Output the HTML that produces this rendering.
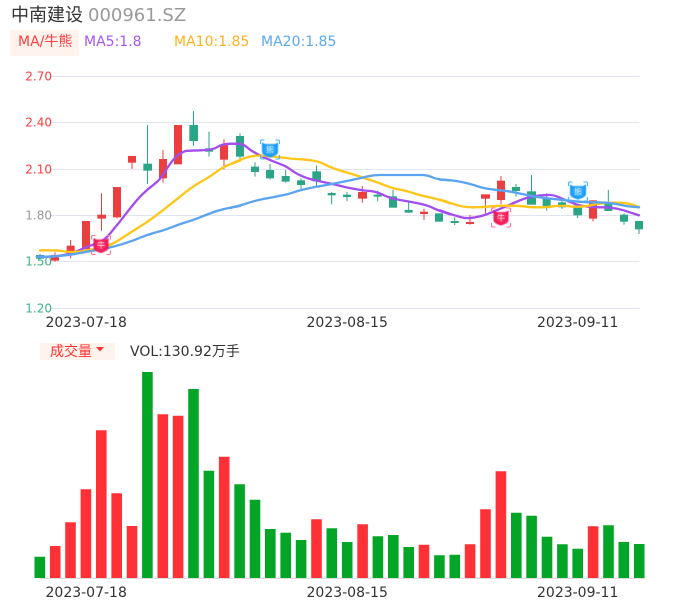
<!DOCTYPE html>
<html lang="zh">
<head>
<meta charset="utf-8">
<title>中南建设</title>
<style>
html,body{margin:0;padding:0;background:#fff;width:686px;height:606px;overflow:hidden}
svg{display:block}
text{font-family:"DejaVu Sans","WenQuanYi Zen Hei","Noto Sans CJK SC",sans-serif}
</style>
</head>
<body>
<svg width="686" height="606" viewBox="0 0 686 606" xmlns="http://www.w3.org/2000/svg">
<defs>
<radialGradient id="rg" cx="50%" cy="45%" r="60%"><stop offset="0" stop-color="#ff4d7d"/><stop offset="1" stop-color="#f0054c"/></radialGradient>
<radialGradient id="bg" cx="50%" cy="45%" r="60%"><stop offset="0" stop-color="#52bcff"/><stop offset="1" stop-color="#0492fb"/></radialGradient>
<filter id="soft" x="-20%" y="-20%" width="140%" height="140%"><feGaussianBlur stdDeviation=".45"/></filter>
</defs>
<!-- header -->
<text x="11" y="21" font-size="18" fill="#333">中南建设</text>
<text x="88" y="21" font-size="18" fill="#999">000961.SZ</text>
<rect x="10" y="30" width="69" height="26" fill="#fff3ee"/>
<text x="18" y="46" font-size="14" fill="#ff4040">MA/牛熊</text>
<text x="84" y="46" font-size="14" fill="#a855f7">MA5:1.8</text>
<text x="174" y="46" font-size="14" fill="#ffb31a">MA10:1.85</text>
<text x="261" y="46" font-size="14" fill="#5ba8f5">MA20:1.85</text>

<!-- grid -->
<g stroke="#e2e5f0" stroke-width="1">
<path d="M50 76.500H639M50 122.500H639M50 169.500H639M50 215.500H639M50 261.500H639M50 308.500H639"/>
</g>
<!-- axis labels -->
<g font-size="12" text-anchor="end">
<text x="52" y="80.500" fill="#ff3b3b">2.70</text>
<text x="52" y="126.500" fill="#ff3b3b">2.40</text>
<text x="52" y="173.500" fill="#ff3b3b">2.10</text>
<text x="52" y="219.500" fill="#999">1.80</text>
<text x="52" y="265.500" fill="#3fb08e">1.50</text>
<text x="52" y="312.500" fill="#3fb08e">1.20</text>
</g>

<!-- candles: left -->
<g transform="translate(20 100) scale(.33333)">
<g fill="#eb3f3f">
<rect x="93" y="465" width="24" height="17"/><rect x="103.500" y="457" width="3" height="28"/>
<rect x="140" y="437" width="24" height="29"/><rect x="150.500" y="420" width="3" height="55"/>
<rect x="186" y="363" width="24" height="85"/>
<rect x="232" y="344" width="26" height="12"/><rect x="243" y="280" width="3" height="112"/>
<rect x="279" y="261" width="24" height="91"/><rect x="289.500" y="261" width="3" height="94"/>
<rect x="324" y="168" width="24" height="20"/><rect x="334.500" y="168" width="3" height="39"/>
<rect x="417" y="177" width="24" height="58"/><rect x="427.500" y="150" width="3" height="98"/>
<rect x="462" y="75" width="24" height="118"/>
<rect x="600" y="134" width="24" height="45"/><rect x="610.500" y="118" width="3" height="90"/>
</g>
<g fill="#2aa687">
<rect x="48" y="465" width="24" height="11"/><rect x="58.500" y="462" width="3" height="16"/>
<rect x="370" y="191" width="26" height="21"/><rect x="381" y="75" width="3" height="177"/>
<rect x="508" y="75" width="26" height="48"/><rect x="519" y="33" width="3" height="104"/>
<rect x="555" y="145" width="24" height="10"/><rect x="565.500" y="95" width="3" height="75"/>
</g>
</g>
<!-- candles: middle -->
<g transform="translate(230 100) scale(.33333)">
<g fill="#2aa687">
<rect x="18" y="108" width="24" height="62"/><rect x="28.500" y="100" width="3" height="78"/>
<rect x="63" y="200" width="24" height="16"/><rect x="73.500" y="187" width="3" height="43"/>
<rect x="108" y="210" width="24" height="25"/><rect x="118.500" y="192" width="3" height="46"/>
<rect x="155" y="228" width="24" height="17"/><rect x="165.500" y="210" width="3" height="38"/>
<rect x="201" y="241" width="24" height="14"/><rect x="211.500" y="235" width="3" height="32"/>
<rect x="247" y="214" width="26" height="30"/><rect x="258" y="197" width="3" height="63"/>
<rect x="293" y="279" width="24" height="7"/><rect x="303.500" y="276" width="3" height="37"/>
<rect x="339" y="284" width="24" height="7"/><rect x="349.500" y="276" width="3" height="27"/>
<rect x="431" y="284" width="24" height="6"/><rect x="441.500" y="272" width="3" height="32"/>
<rect x="477" y="289" width="24" height="34"/><rect x="487.500" y="270" width="3" height="53"/>
<rect x="524" y="330" width="24" height="8"/><rect x="534.500" y="305" width="3" height="33"/>
<rect x="615" y="340" width="24" height="25"/>
</g>
<g fill="#eb3f3f">
<rect x="384" y="276" width="27" height="20"/><rect x="395.500" y="258" width="3" height="50"/>
<rect x="570" y="335" width="24" height="7"/><rect x="580.500" y="326" width="3" height="34"/>
</g>
</g>
<!-- candles: right -->
<g transform="translate(440 130) scale(.33333)">
<g fill="#2aa687">
<rect x="32" y="273" width="24" height="6"/><rect x="42.500" y="262" width="3" height="23"/>
<rect x="216" y="171" width="24" height="12"/><rect x="226.500" y="162" width="3" height="38"/>
<rect x="261" y="184" width="27" height="40"/><rect x="273" y="135" width="3" height="89"/>
<rect x="308" y="205" width="24" height="23"/><rect x="318.500" y="190" width="3" height="52"/>
<rect x="354" y="217" width="24" height="15"/><rect x="364.500" y="210" width="3" height="27"/>
<rect x="400" y="226" width="26" height="30"/><rect x="411.500" y="226" width="3" height="38"/>
<rect x="493" y="222" width="24" height="21"/><rect x="503.500" y="180" width="3" height="63"/>
<rect x="540" y="254" width="24" height="21"/><rect x="550.500" y="250" width="3" height="34"/>
<rect x="585" y="273" width="24" height="25"/><rect x="595.500" y="273" width="3" height="39"/>
</g>
<g fill="#eb3f3f">
<rect x="78" y="276" width="24" height="6"/><rect x="88.500" y="255" width="3" height="29"/>
<rect x="123" y="193" width="27" height="13"/><rect x="135" y="193" width="3" height="57"/>
<rect x="171" y="152" width="24" height="58"/><rect x="181.500" y="138" width="3" height="84"/>
<rect x="447" y="211" width="24" height="55"/><rect x="457.500" y="211" width="3" height="63"/>
</g>
</g>

<!-- MA lines -->
<g fill="none" stroke-linejoin="round" stroke-linecap="round" stroke-width="7">
<g stroke="#a44dee">
<path transform="translate(20 100) scale(.33333)" d="M60,470 L82,470 Q105,470 127,466 Q150,462 165,456 Q180,450 195,443 Q210,437 227,431 Q245,425 255,416 Q265,408 282,386 Q300,365 325,332 Q350,300 366,284 Q382,268 401,254 Q420,240 435,215 Q450,190 462,177 Q474,165 482,160 Q490,155 497,153 Q505,152 542,151 Q580,150 592,141 Q605,132 632,131 L660,131"/>
<path transform="translate(230 100) scale(.33333)" d="M0,131 L20,131 Q40,132 50,141 Q60,150 80,161 Q100,172 125,182 Q150,192 160,196 Q170,200 185,211 Q200,222 220,230 Q240,238 270,244 Q300,250 325,256 Q350,263 375,267 Q400,272 420,273 Q440,275 460,285 Q480,295 510,300 Q540,305 565,310 Q590,315 605,322 Q620,330 640,336 L660,343"/>
<path transform="translate(440 130) scale(.33333)" d="M0,241 L20,248 Q40,255 55,259 Q70,264 80,264 Q90,265 110,261 Q130,258 155,247 Q180,237 205,226 Q230,215 250,207 Q270,200 295,197 Q320,194 332,195 Q345,196 362,204 Q380,212 400,220 Q420,228 445,230 Q470,232 490,232 Q510,232 530,236 Q550,240 573,248 L597,256"/>
</g>
<g stroke="#ffc61a">
<path transform="translate(20 100) scale(.33333)" d="M60,451 L85,451 Q110,451 125,453 Q140,456 157,456 Q175,456 197,452 Q220,448 245,442 Q270,437 295,421 Q320,405 350,386 Q380,368 405,349 Q430,330 455,310 Q480,290 500,274 Q520,258 545,244 Q570,230 590,215 Q610,200 635,191 L660,182"/>
<path transform="translate(230 100) scale(.33333)" d="M0,193 L20,184 Q40,175 60,170 Q80,165 115,168 Q150,172 170,174 Q190,177 215,178 Q240,180 255,183 Q270,186 290,196 Q310,206 335,213 Q360,220 385,228 Q410,237 430,243 Q450,250 470,258 Q490,266 510,269 Q530,273 555,281 Q580,289 600,292 Q620,296 640,303 L660,310"/>
<path transform="translate(440 130) scale(.33333)" d="M0,209 L20,215 Q40,222 57,227 Q75,232 102,232 Q130,232 155,229 Q180,227 205,227 Q230,227 250,229 Q270,232 295,232 Q320,232 340,229 Q360,226 380,228 Q400,231 420,230 Q440,229 465,223 Q490,218 525,218 Q560,218 578,224 L597,231"/>
</g>
<g stroke="#5ba4f2">
<path transform="translate(20 100) scale(.33333)" d="M50,470 L75,470 Q100,470 125,467 Q150,465 175,460 Q200,455 225,451 Q250,448 275,441 Q300,435 320,428 Q340,422 360,413 Q380,405 405,398 Q430,392 455,382 Q480,372 500,366 Q520,360 545,350 Q570,340 590,333 Q610,327 635,322 L660,318"/>
<path transform="translate(230 100) scale(.33333)" d="M0,324 L20,319 Q40,314 60,307 Q80,301 105,296 Q130,292 152,287 Q175,283 197,275 Q220,268 255,261 Q290,255 315,250 Q340,245 365,240 Q390,235 410,230 Q430,225 450,225 L575,225 Q590,225 605,231 Q620,238 640,239 L660,241"/>
<path transform="translate(440 130) scale(.33333)" d="M0,149 L20,150 Q40,151 65,156 Q90,161 110,168 Q130,175 155,178 Q180,181 205,184 Q230,188 255,194 Q280,200 300,202 Q320,205 350,208 Q380,211 405,214 Q430,217 470,217 Q510,218 535,223 Q560,229 578,230 L597,232"/>
</g>
</g>

<!-- signal icons -->
<g transform="translate(101 245)">
<path d="M-9.500-5.500v-2.500q0-1.500 1.500-1.500h2.500M5.500-9.500h2.500q1.500 0 1.500 1.500v2.500M9.500 5.500v2.500q0 1.500-1.500 1.500h-2.500M-5.500 9.500h-2.500q-1.500 0-1.500-1.500v-2.500" fill="none" stroke="#ff6f98" stroke-width="1.100"/>
<path d="M-7.500-7l3 1.500h9l3-1.500V2.500C7.500 5.500 3 7 0 8-3 7-7.500 5.500-7.500 2.500z" fill="url(#rg)" filter="url(#soft)"/>
<text x="0" y="3" font-size="8" fill="#ffd0dc" text-anchor="middle">牛</text>
</g>
<g transform="translate(501 217.500)">
<path d="M-9.500-5.500v-2.500q0-1.500 1.500-1.500h2.500M5.500-9.500h2.500q1.500 0 1.500 1.500v2.500M9.500 5.500v2.500q0 1.500-1.500 1.500h-2.500M-5.500 9.500h-2.500q-1.500 0-1.500-1.500v-2.500" fill="none" stroke="#ff6f98" stroke-width="1.100"/>
<path d="M-7.500-7l3 1.500h9l3-1.500V2.500C7.500 5.500 3 7 0 8-3 7-7.500 5.500-7.500 2.500z" fill="url(#rg)" filter="url(#soft)"/>
<text x="0" y="3" font-size="8" fill="#ffd0dc" text-anchor="middle">牛</text>
</g>
<g transform="translate(270 149.500)">
<path d="M-9.500-5.500v-2.500q0-1.500 1.500-1.500h2.500M5.500-9.500h2.500q1.500 0 1.500 1.500v2.500M9.500 5.500v2.500q0 1.500-1.500 1.500h-2.500M-5.500 9.500h-2.500q-1.500 0-1.500-1.500v-2.500" fill="none" stroke="#45b6ff" stroke-width="1.100"/>
<path d="M-8-7l3 1.500h10l3-1.500V2.500C8 5.500 3 7 0 8-3 7-8 5.500-8 2.500z" fill="url(#bg)" filter="url(#soft)"/>
<text x="0" y="3" font-size="8" fill="#c8eaff" text-anchor="middle">熊</text>
</g>
<g transform="translate(578 191.500)">
<path d="M-9.500-5.500v-2.500q0-1.500 1.500-1.500h2.500M5.500-9.500h2.500q1.500 0 1.500 1.500v2.500M9.500 5.500v2.500q0 1.500-1.500 1.500h-2.500M-5.500 9.500h-2.500q-1.500 0-1.500-1.500v-2.500" fill="none" stroke="#45b6ff" stroke-width="1.100"/>
<path d="M-8-7l3 1.500h10l3-1.500V2.500C8 5.500 3 7 0 8-3 7-8 5.500-8 2.500z" fill="url(#bg)" filter="url(#soft)"/>
<text x="0" y="3" font-size="8" fill="#c8eaff" text-anchor="middle">熊</text>
</g>

<!-- date axis -->
<g font-size="14" fill="#333">
<text x="45.500" y="327">2023-07-18</text>
<text x="306.500" y="327">2023-08-15</text>
<text x="537" y="327">2023-09-11</text>
<text x="45.500" y="597">2023-07-18</text>
<text x="306.500" y="597">2023-08-15</text>
<text x="537" y="597">2023-09-11</text>
</g>

<!-- volume header -->
<rect x="40" y="343" width="75" height="17" fill="#fff3ee"/>
<text x="50" y="356" font-size="14" fill="#ff3333">成交量</text>
<path d="M96 347h8l-4 4.500z" fill="#ff3333"/>
<text x="130" y="356" font-size="14" fill="#333">VOL:130.92万手</text>

<!-- volume baseline -->
<path d="M40 578.500H645" stroke="#ddd" stroke-width="1"/>
<!-- volume bars -->
<path fill="#03a526" d="M34.500 556.700h10.600V578h-10.600zM142.100 372h10.600V578h-10.600zM188.200 389h10.600V578h-10.600zM203.600 470.700h10.600V578h-10.600zM234.300 484.300h10.600V578h-10.600zM249.700 499.700h10.600V578h-10.600zM265 529h10.600V578h-10.600zM280.400 532.700h10.600V578h-10.600zM295.800 540h10.600V578h-10.600zM326.500 528.300h10.600V578h-10.600zM341.900 542h10.600V578h-10.600zM372.600 536.300h10.600V578h-10.600zM388 535h10.600V578h-10.600zM403.400 547h10.600V578h-10.600zM434.100 555.300h10.600V578h-10.600zM449.500 554.700h10.600V578h-10.600zM511 512.700h10.600V578h-10.600zM526.300 515.700h10.600V578h-10.600zM541.700 536.700h10.600V578h-10.600zM557.100 544.300h10.600V578h-10.600zM572.400 548.700h10.600V578h-10.600zM603.200 525.300h10.600V578h-10.600zM618.500 542h10.600V578h-10.600zM633.900 544h10.600V578h-10.600z"/>
<path fill="#ff3036" d="M49.900 546h10.600V578h-10.600zM65.200 522.300h10.600V578h-10.600zM80.600 489.300h10.600V578h-10.600zM96 430.300h10.600V578h-10.600zM111.400 493.300h10.600V578h-10.600zM126.700 526h10.600V578h-10.600zM157.500 414.300h10.600V578h-10.600zM172.800 415.700h10.600V578h-10.600zM218.900 456.700h10.600V578h-10.600zM311.200 519.300h10.600V578h-10.600zM357.300 524.300h10.600V578h-10.600zM418.700 544.700h10.600V578h-10.600zM464.800 544.300h10.600V578h-10.600zM480.200 509.300h10.600V578h-10.600zM495.600 471.300h10.600V578h-10.600zM587.800 526.300h10.600V578h-10.600z"/>
</svg>
</body>
</html>
